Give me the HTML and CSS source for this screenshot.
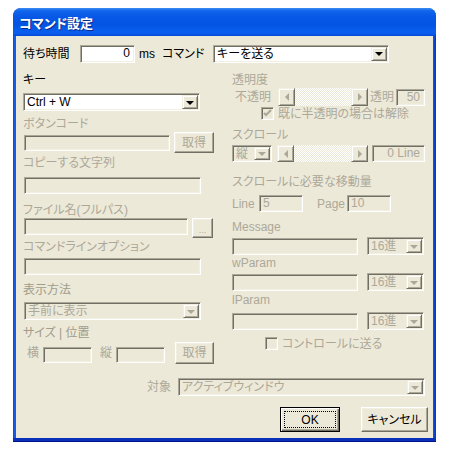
FILE: index.html
```html
<!DOCTYPE html>
<html lang="ja">
<head>
<meta charset="utf-8">
<title>コマンド設定</title>
<link rel="stylesheet" href="styles.css">
</head>
<body>
<div class="window">
  <div class="titlebar"><span class="title">コマンド設定</span></div>
  <div class="frame">
    <div class="client">
      <div class="toprow">
        <span class="t-wait">待ち時間</span>
        <div class="edit on e-wait">0</div>
        <span class="t-ms">ms</span>
        <span class="t-cmd">コマンド</span>
        <div class="combo on c-cmd"><span class="ctext">キーを送る</span><span class="dbtn"><i class="tri"></i></span></div>
      </div>

      <div class="cols">
        <div class="col left">
          <div class="lbl l-key">キー</div>
          <div class="combo on c-key"><span class="ctext">Ctrl + W</span><span class="dbtn"><i class="tri"></i></span></div>
          <div class="lbl dis l-btncode">ボタンコード</div>
          <div class="hrow r-btncode">
            <div class="edit e-btncode"></div>
            <div class="button dis b-get1">取得</div>
          </div>
          <div class="lbl dis l-copy">コピーする文字列</div>
          <div class="edit e-copy"></div>
          <div class="lbl dis l-file">ファイル名(フルパス)</div>
          <div class="hrow r-file">
            <div class="edit e-file"></div>
            <div class="button dis b-browse">...</div>
          </div>
          <div class="lbl dis l-cmdline">コマンドラインオプション</div>
          <div class="edit e-cmdline"></div>
          <div class="lbl dis2 l-show">表示方法</div>
          <div class="combo c-show"><span class="ctext dis">手前に表示</span><span class="dbtn"><i class="tri off"></i></span></div>
          <div class="lbl dis2 l-size">サイズ | 位置</div>
          <div class="hrow r-size">
            <span class="dis t-yoko">横</span>
            <div class="edit e-size"></div>
            <span class="dis t-tate">縦</span>
            <div class="edit e-size"></div>
            <div class="button dis b-get2">取得</div>
          </div>
        </div>

        <div class="col right">
          <div class="lbl dis l-trans">透明度</div>
          <div class="hrow r-trans">
            <span class="dis t-opaque">不透明</span>
            <div class="sb sb-trans"><span class="arr"><i class="tri-l"></i></span><span class="track"></span><span class="arr"><i class="tri-r"></i></span></div>
            <span class="dis t-clear">透明</span>
            <div class="edit num e-trans dis">50</div>
          </div>
          <div class="hrow r-chk1">
            <span class="chk chk1"><svg width="9" height="9" viewBox="0 0 9 9"><polyline points="1,4 3,6 8,1" fill="none" stroke="#ACA899" stroke-width="2"/></svg></span>
            <span class="dis t-chk">既に半透明の場合は解除</span>
          </div>
          <div class="lbl dis l-scroll">スクロール</div>
          <div class="hrow r-scroll">
            <div class="combo c-tate"><span class="ctext dis">縦</span><span class="dbtn"><i class="tri off"></i></span></div>
            <div class="sb sb-scroll"><span class="arr"><i class="tri-l"></i></span><span class="track"></span><span class="arr"><i class="tri-r"></i></span></div>
            <div class="edit num e-line dis">0 Line</div>
          </div>
          <div class="lbl dis l-amount">スクロールに必要な移動量</div>
          <div class="hrow r-amount">
            <span class="dis t-line">Line</span>
            <div class="edit e-amt dis">5</div>
            <span class="dis t-page">Page</span>
            <div class="edit e-amt dis">10</div>
          </div>
          <div class="lbl dis l-msg">Message</div>
          <div class="hrow r-param">
            <div class="edit e-param"></div>
            <div class="combo c-hex"><span class="ctext dis">16進</span><span class="dbtn"><i class="tri off"></i></span></div>
          </div>
          <div class="lbl dis l-wparam">wParam</div>
          <div class="hrow r-param">
            <div class="edit e-param"></div>
            <div class="combo c-hex"><span class="ctext dis">16進</span><span class="dbtn"><i class="tri off"></i></span></div>
          </div>
          <div class="lbl dis l-lparam">lParam</div>
          <div class="hrow r-param r-lparam">
            <div class="edit e-param"></div>
            <div class="combo c-hex"><span class="ctext dis">16進</span><span class="dbtn"><i class="tri off"></i></span></div>
          </div>
          <div class="hrow r-chk2">
            <span class="chk chk2"></span>
            <span class="dis t-chk">コントロールに送る</span>
          </div>
        </div>
      </div>

      <div class="target-row">
        <span class="dis t-target">対象</span>
        <div class="combo c-target"><span class="ctext dis">アクティブウィンドウ</span><span class="dbtn"><i class="tri off"></i></span></div>
      </div>

      <div class="btn-row">
        <div class="button ok"><span class="focus">OK</span></div>
        <div class="button cancel">キャンセル</div>
      </div>
    </div>
  </div>
</div>
</body>
</html>
```

FILE: styles.css
```css
html, body {
  margin: 0;
  padding: 0;
  background: #ffffff;
}

body {
  font-family: "Liberation Sans", "Noto Sans CJK JP", sans-serif;
  font-size: 12px;
  line-height: 14px;
  color: #000;
  font-feature-settings: "palt";
}

.window {
  margin: 8px 0 0 13px;
  width: 423px;
  height: 434px;
  display: flex;
  flex-direction: column;
  border-radius: 8px 8px 0 0;
  overflow: hidden;
  background: #0A4FDD;
}

.titlebar {
  height: 28px;
  flex: none;
  box-sizing: border-box;
  padding: 4px 0 0 6px;
  display: flex;
  align-items: center;
  background: linear-gradient(180deg, #3C8CF4 0%, #1166EC 10%, #0758E6 30%, #0454E4 60%, #0A5EEE 85%, #0A5AEB 93%, #0447D2 100%);
}

.title {
  color: #fff;
  font-weight: bold;
  font-size: 13px;
  text-shadow: 1px 1px 0 #0A2A8A;
  letter-spacing: 0;
}

.frame {
  flex: 1;
  display: flex;
  padding: 0 3px 4px 3px;
  background: linear-gradient(90deg, #0831D9 0, #1A5FE8 1px, #1658E6 3px, #1658E6 calc(100% - 3px), #0A3FCC calc(100% - 1px), #0831D9 100%);
  border-bottom: 0;
  box-shadow: inset 0 -1px 0 #00138C, inset 0 -4px 0 #0A2FB8;
}

.client {
  flex: 1;
  background: #ECE9D8;
  padding: 8px 0 0 7px;
  display: flex;
  flex-direction: column;
}

/* generic */
.lbl {
  height: 14px;
  line-height: 14px;
  white-space: nowrap;
}
.dis { color: #ACA899; }
.dis2 { color: #9F9C8C; }

.hrow {
  display: flex;
  align-items: center;
  white-space: nowrap;
}

.edit {
  box-sizing: border-box;
  height: 17px;
  border: 1px solid;
  border-color: #ACA899 #ffffff #ffffff #ACA899;
  box-shadow: inset 1px 1px 0 #716F64, inset -1px -1px 0 #F1EFE2;
  background: #ECE9D8;
  padding: 1px 4px 0 3px;
  line-height: 13px;
  white-space: nowrap;
  overflow: hidden;
  flex: none;
}
.edit.on { background: #ffffff; }
.edit.num { text-align: right; }

.combo {
  box-sizing: border-box;
  height: 18px;
  border: 1px solid;
  border-color: #ACA899 #ffffff #ffffff #ACA899;
  box-shadow: inset 1px 1px 0 #716F64, inset -1px -1px 0 #F1EFE2;
  background: #ECE9D8;
  padding: 1px;
  display: flex;
  align-items: stretch;
  flex: none;
}
.combo.on { background: #ffffff; }
.ctext {
  flex: 1;
  padding: 0 0 0 2px;
  line-height: 14px;
  white-space: nowrap;
  overflow: hidden;
}
.dbtn {
  width: 16px;
  flex: none;
  box-sizing: border-box;
  border: 1px solid;
  border-color: #F1EFE2 #716F64 #716F64 #F1EFE2;
  box-shadow: inset 1px 1px 0 #ffffff, inset -1px -1px 0 #ACA899;
  background: #ECE9D8;
  display: flex;
  align-items: center;
  justify-content: center;
}
.tri {
  width: 0;
  height: 0;
  border-left: 4px solid transparent;
  border-right: 4px solid transparent;
  border-top: 4px solid #000;
  margin-top: 1px;
}
.tri.off { border-top-color: #ACA899; }

.button {
  box-sizing: border-box;
  border: 1px solid;
  border-color: #ffffff #716F64 #716F64 #ffffff;
  box-shadow: inset -1px -1px 0 #ACA899, inset 1px 1px 0 #F1EFE2;
  background: #ECE9D8;
  display: flex;
  align-items: center;
  justify-content: center;
  flex: none;
  white-space: nowrap;
}

/* top row */
.toprow {
  height: 19px;
  display: flex;
  align-items: center;
  white-space: nowrap;
}
.t-wait { width: 57px; flex: none; }
.e-wait { width: 55px; height: 18px; text-align: right; }
.t-ms { margin-left: 4px; width: 23px; flex: none; }
.t-cmd { width: 51px; flex: none; }
.c-cmd { width: 176px; }

/* columns */
.cols {
  display: flex;
  height: 301px;
  flex: none;
}
.col {
  display: flex;
  flex-direction: column;
}
.left { width: 191px; flex: none; }
.right { width: 194px; margin-left: 18px; flex: none; }

/* left column */
.l-key { margin-top: 10px; }
.c-key { margin-top: 6px; width: 177px; }
.l-btncode { margin-top: 6px; }
.r-btncode { margin-top: 1px; height: 21px; }
.e-btncode { width: 146px; height: 16px; margin-left: 1px; }
.b-get1 { width: 40px; height: 21px; margin-left: 4px; }
.l-copy { margin-top: 3px; }
.e-copy { margin-top: 7px; width: 177px; margin-left: 1px; }
.l-file { margin-top: 9px; }
.r-file { margin-top: 1px; height: 20px; align-items: flex-start; }
.e-file { width: 164px; margin-left: 1px; }
.b-browse { width: 21px; height: 20px; margin-left: 4px; font-size: 9px; line-height: 10px; padding-top: 4px; }
.l-cmdline { margin-top: 2px; }
.e-cmdline { margin-top: 4px; width: 177px; margin-left: 1px; }
.l-show { margin-top: 8px; }
.c-show { margin-top: 5px; width: 177px; margin-left: 1px; }
.l-size { margin-top: 6px; }
.r-size { margin-top: 2px; height: 22px; }
.t-yoko { margin-left: 4px; width: 16px; flex: none; }
.e-size { width: 49px; height: 16px; margin-top: 3px; }
.t-tate { margin-left: 8px; width: 16px; flex: none; }
.b-get2 { width: 39px; height: 22px; margin-left: 10px; }

/* right column */
.l-trans { margin-top: 10px; }
.r-trans { margin-top: 1px; height: 18px; }
.t-opaque { margin-left: 3px; width: 43px; flex: none; }
.sb {
  display: flex;
  flex: none;
  box-sizing: border-box;
}
.sb-trans { width: 90px; height: 18px; }
.sb-scroll { width: 91px; height: 17px; margin-left: 5px; }
.arr {
  width: 17px;
  flex: none;
  box-sizing: border-box;
  border: 1px solid;
  border-color: #F1EFE2 #716F64 #716F64 #F1EFE2;
  box-shadow: inset 1px 1px 0 #ffffff, inset -1px -1px 0 #ACA899;
  background: #ECE9D8;
  display: flex;
  align-items: center;
  justify-content: center;
}
.track {
  flex: 1;
  background: repeating-conic-gradient(#ffffff 0 25%, #ECE9D8 0 50%) 0 0 / 2px 2px;
}
.tri-l {
  width: 0; height: 0;
  border-top: 4px solid transparent;
  border-bottom: 4px solid transparent;
  border-right: 4px solid #ACA899;
}
.tri-r {
  width: 0; height: 0;
  border-top: 4px solid transparent;
  border-bottom: 4px solid transparent;
  border-left: 4px solid #ACA899;
}
.t-clear { margin-left: 2px; width: 26px; flex: none; }
.e-trans { width: 29px; }

.r-chk1 { margin-top: 1px; height: 13px; }
.chk {
  width: 13px;
  height: 13px;
  box-sizing: border-box;
  border: 1px solid;
  border-color: #ACA899 #ffffff #ffffff #ACA899;
  box-shadow: inset 1px 1px 0 #716F64, inset -1px -1px 0 #F1EFE2;
  background: #ECE9D8;
  display: flex;
  align-items: center;
  justify-content: center;
  flex: none;
}
.chk1 { margin-left: 29px; }
.chk2 { margin-left: 33px; }
.t-chk { margin-left: 4px; }

.l-scroll { margin-top: 8px; }
.r-scroll { margin-top: 3px; height: 17px; }
.c-tate { width: 40px; height: 17px; }
.e-line { width: 53px; margin-left: 4px; }

.l-amount { margin-top: 13px; }
.r-amount { margin-top: 6px; height: 17px; }
.t-line { width: 27px; flex: none; }
.e-amt { width: 44px; }
.t-page { margin-left: 14px; width: 30px; flex: none; }

.l-msg { margin-top: 8px; }
.r-param { margin-top: 3px; height: 18px; }
.e-param { width: 126px; }
.c-hex { width: 57px; margin-left: 9px; }
.l-wparam { margin-top: 1px; }
.l-lparam { margin-top: 2px; }
.r-lparam { margin-top: 5px; }
.r-chk2 { margin-top: 7px; height: 13px; }

/* bottom */
.target-row {
  margin-top: 14px;
  height: 18px;
  display: flex;
  align-items: center;
}
.t-target { margin-left: 124px; width: 31px; flex: none; }
.c-target { width: 247px; }

.btn-row {
  margin-top: 11px;
  height: 25px;
  display: flex;
}
.ok {
  margin-left: 257px;
  width: 60px;
  height: 25px;
  border: 1px solid #000;
  box-shadow: inset 1px 1px 0 #ffffff, inset -1px -1px 0 #716F64, inset -2px -2px 0 #ACA899;
  padding: 3px;
}
.focus {
  flex: 1;
  align-self: stretch;
  border: 1px dotted #000;
  display: flex;
  align-items: center;
  justify-content: center;
}
.cancel {
  margin-left: 21px;
  width: 67px;
  height: 25px;
}
```
